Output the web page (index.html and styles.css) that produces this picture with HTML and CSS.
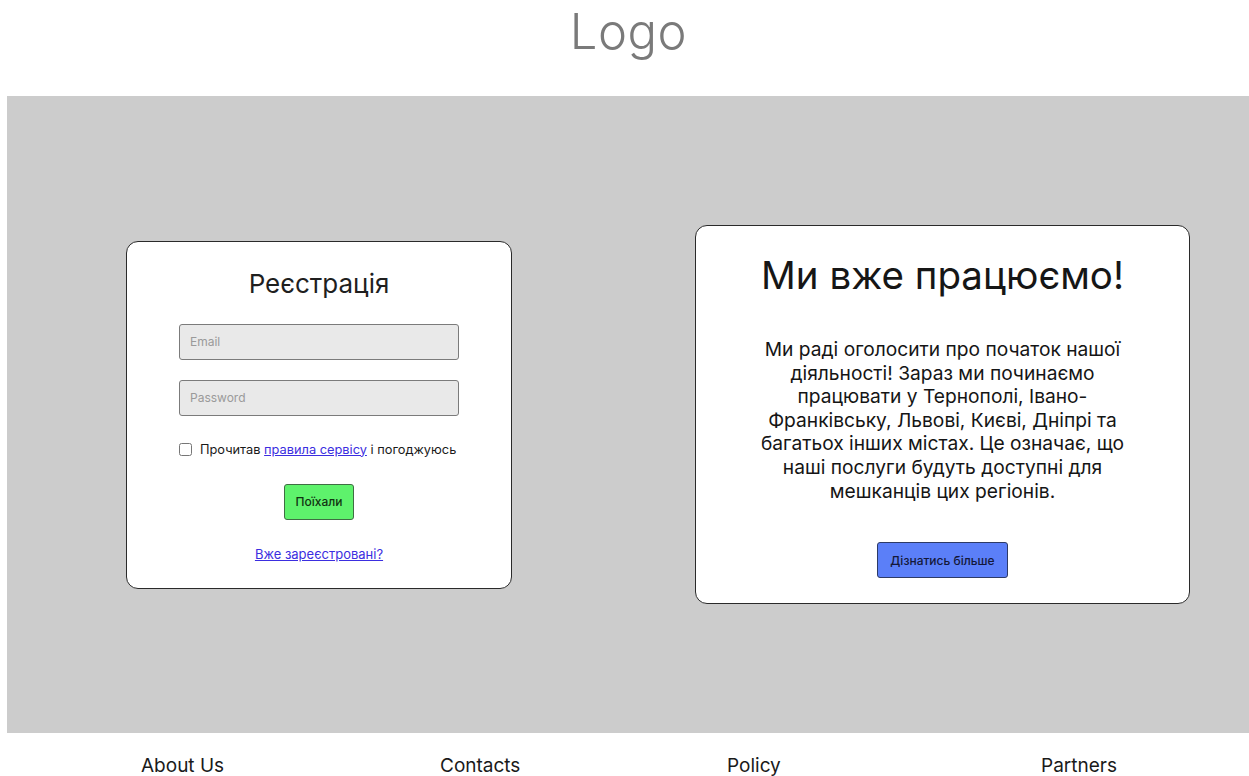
FILE: index.html
```html
<!DOCTYPE html>
<html lang="uk">
<head>
<meta charset="utf-8">
<title>Logo</title>
<link rel="stylesheet" href="styles.css">
</head>
<body>
  <header class="site-header">
    <div class="logo">Logo</div>
  </header>

  <main class="hero">
    <section class="card signup">
      <h2 class="signup-title">Реєстрація</h2>
      <form class="signup-form">
        <div class="fields">
          <input class="field" type="email" placeholder="Email">
          <input class="field" type="password" placeholder="Password">
        </div>
        <label class="agree">
          <input class="agree-box" type="checkbox">
          <span>Прочитав <a href="#" class="link">правила сервісу</a> і погоджуюсь</span>
        </label>
        <button class="btn btn-go" type="button">Поїхали</button>
        <a href="#" class="link signin-link">Вже зареєстровані?</a>
      </form>
    </section>

    <section class="card news">
      <h1 class="news-title">Ми вже працюємо!</h1>
      <p class="news-text">Ми раді оголосити про початок нашої діяльності! Зараз ми починаємо працювати у Тернополі, Івано-Франківську, Львові, Києві, Дніпрі та багатьох інших містах. Це означає, що наші послуги будуть доступні для мешканців цих регіонів.</p>
      <button class="btn btn-more" type="button">Дізнатись більше</button>
    </section>
  </main>

  <footer class="site-footer">
    <a href="#" class="footer-link">About Us</a>
    <a href="#" class="footer-link">Contacts</a>
    <a href="#" class="footer-link">Policy</a>
    <a href="#" class="footer-link">Partners</a>
  </footer>
</body>
</html>
```

FILE: styles.css
```css
* {
  box-sizing: border-box;
}

html, body {
  margin: 0;
  padding: 0;
  background: #ffffff;
  overflow: hidden;
}

body {
  font-family: Inter, "Noto Sans", sans-serif;
  color: #111;
}

/* Header with the wordmark */
.site-header {
  height: 96px;
  display: flex;
  justify-content: center;
  padding-left: 8px;
}

.logo {
  font-weight: 300;
  font-size: 49px;
  line-height: 64px;
  color: #7a7a7a;
  letter-spacing: 0.5px;
}

/* Gray band holding the two cards */
.hero {
  margin-left: 7px;
  height: 637px;
  background: #cccccc;
  display: grid;
  grid-template-columns: 1fr 1fr;
  align-items: center;
  justify-items: center;
}

.card {
  background: #ffffff;
  border: 1.5px solid #2a2a2a;
  border-radius: 12px;
  display: flex;
  flex-direction: column;
  align-items: center;
}

/* Sign-up card */
.signup {
  width: 386px;
  height: 348px;
  padding: 26px 52px 0;
  margin-left: 3px;
}

.signup-title {
  margin: 0;
  font-weight: 400;
  font-size: 26px;
  line-height: 31px;
  color: #1f1f1f;
}

.signup-form {
  width: 100%;
  margin-top: 25px;
  display: flex;
  flex-direction: column;
  align-items: center;
}

.fields {
  width: 100%;
  display: flex;
  flex-direction: column;
  gap: 20px;
}

.field {
  width: 280px;
  height: 36px;
  padding: 0 10px;
  background: #e9e9e9;
  border: 1.5px solid #7b7b7b;
  border-radius: 3px;
  font-family: Inter, "Noto Sans", sans-serif;
  font-size: 12px;
  color: #333;
  outline: none;
}

.field::placeholder {
  color: #9a9a9a;
}

.agree {
  margin-top: 26px;
  width: 280px;
  display: flex;
  align-items: center;
  gap: 8px;
  font-size: 12.8px;
  line-height: 16px;
  color: #1a1a1a;
  white-space: nowrap;
}

.agree-box {
  margin: 0;
  width: 13px;
  height: 13px;
  flex: none;
}

.link {
  color: #3b2ee0;
  text-decoration: underline;
}

.btn {
  height: 36px;
  border-radius: 3px;
  font-family: Inter, "Noto Sans", sans-serif;
  font-size: 12px;
  font-weight: 500;
  cursor: pointer;
  padding: 0;
}

.btn-go {
  margin-top: 26px;
  width: 70px;
  background: #5ef26c;
  border: 1px solid #3f6e43;
  color: #113311;
}

.signin-link {
  margin-top: 26px;
  font-size: 13px;
  line-height: 16px;
}

/* News card */
.news {
  width: 495px;
  height: 379px;
  padding: 26px 50px 0;
  margin-left: 8px;
}

.news-title {
  margin: 0;
  font-weight: 400;
  font-size: 38.5px;
  line-height: 46px;
  color: #161616;
  white-space: nowrap;
}

.news-text {
  margin: 40px 0 0;
  width: 385px;
  text-align: center;
  font-size: 19.2px;
  line-height: 23.6px;
  color: #151515;
}

.btn-more {
  margin-top: 39px;
  width: 131px;
  background: #5b7ff8;
  border: 1px solid #2d3a66;
  color: #14183a;
}

/* Footer navigation */
.site-footer {
  display: grid;
  grid-template-columns: 299px 287px 314px auto;
  padding: 21px 0 0 141px;
}

.footer-link {
  justify-self: start;
  font-size: 19px;
  line-height: 24px;
  color: #1a1a1a;
  text-decoration: none;
}
```
